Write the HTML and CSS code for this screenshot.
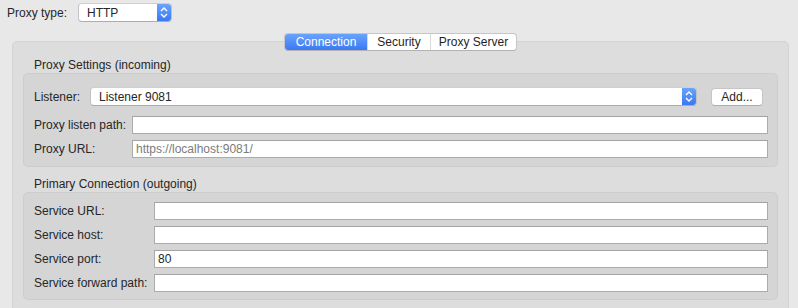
FILE: index.html
```html
<!DOCTYPE html>
<html lang="en">
<head>
    <meta charset="UTF-8">
    <title>Proxy</title>
    <link rel="stylesheet" href="styles.css">
</head>
<body>
    <div class="top-row">
        <span class="label">Proxy type:</span>
        <div class="popup popup-small">
            <span class="popup-text">HTTP</span>
            <span class="stepper">
                <svg width="8" height="11" viewBox="0 0 8 11"><path d="M1 4 L4 1 L7 4 M1 7 L4 10 L7 7" fill="none" stroke="#fff" stroke-width="1.4"/></svg>
            </span>
        </div>
    </div>

    <div class="tabview">
        <div class="tabs">
            <span class="tab active">Connection</span>
            <span class="tab">Security</span>
            <span class="tab">Proxy Server</span>
        </div>

        <div class="group-title">Proxy Settings (incoming)</div>
        <div class="group group-in">
            <div class="row listener-row">
                <span class="label">Listener:</span>
                <div class="popup popup-wide">
                    <span class="popup-text">Listener 9081</span>
                    <span class="stepper">
                        <svg width="8" height="11" viewBox="0 0 8 11"><path d="M1 4 L4 1 L7 4 M1 7 L4 10 L7 7" fill="none" stroke="#fff" stroke-width="1.4"/></svg>
                    </span>
                </div>
                <button class="button">Add...</button>
            </div>
            <div class="row">
                <span class="label label-in">Proxy listen path:</span>
                <input class="field" type="text">
            </div>
            <div class="row">
                <span class="label label-in">Proxy URL:</span>
                <input class="field field-muted" type="text" value="https://localhost:9081/">
            </div>
        </div>

        <div class="group-title group-title-2">Primary Connection (outgoing)</div>
        <div class="group group-out">
            <div class="row">
                <span class="label label-out">Service URL:</span>
                <input class="field" type="text">
            </div>
            <div class="row">
                <span class="label label-out">Service host:</span>
                <input class="field" type="text">
            </div>
            <div class="row">
                <span class="label label-out">Service port:</span>
                <input class="field" type="text" value="80">
            </div>
            <div class="row">
                <span class="label label-out">Service forward path:</span>
                <input class="field" type="text">
            </div>
        </div>
    </div>
</body>
</html>
```

FILE: styles.css
```css
body {
    margin: 0;
    padding: 0;
    background: #e8e8e8;
    font-family: "Liberation Sans", Arial, sans-serif;
    font-size: 12px;
    color: #262626;
    height: 308px;
    overflow: hidden;
}
.top-row {
    display: flex;
    align-items: center;
    height: 19px;
    padding: 3px 7px 0;
}
.top-row .label {
    margin-right: 11px;
}
.popup {
    display: flex;
    align-items: stretch;
    height: 19px;
    box-sizing: border-box;
    background: #fff;
    border: 1px solid #c2c2c2;
    border-top-color: #cfcfcf;
    border-bottom-color: #acacac;
    border-radius: 4px;
    overflow: hidden;
}
.popup-small {
    width: 94px;
}
.popup-text {
    flex: 1;
    display: flex;
    align-items: center;
    padding-left: 8px;
}
.stepper {
    width: 14px;
    display: flex;
    align-items: center;
    justify-content: center;
    background: linear-gradient(to bottom, #6ba4fb, #3a78f4);
}
.tabview {
    margin: 19px 9px 0 12px;
    height: 280px;
    background: #dddddd;
    border: 1px solid #d3d3d3;
    border-radius: 5px;
}
.tabs {
    display: flex;
    width: 233px;
    height: 18px;
    box-sizing: border-box;
    margin: -9px auto 0;
    background: #fff;
    border: 1px solid #c6c6c6;
    border-bottom-color: #b2b2b2;
    border-radius: 4px;
    overflow: hidden;
}
.tab {
    display: flex;
    align-items: center;
    justify-content: center;
    border-left: 1px solid #dadada;
    color: #1f1f1f;
}
.tab:nth-child(1) {
    width: 82px;
    border-left: none;
}
.tab:nth-child(2) {
    width: 62px;
}
.tab:nth-child(3) {
    flex: 1;
}
.tab.active {
    color: #fff;
    background: linear-gradient(to bottom, #6aa3fb, #3b79f4);
}
.group-title {
    height: 15px;
    line-height: 15px;
    margin: 7px 0 0 21px;
}
.group-title-2 {
    margin-top: 10px;
}
.group {
    margin: 0 10px;
    background: #d5d5d5;
    border: 1px solid #cdcdcd;
    border-radius: 5px;
    padding: 0 9px 0 10px;
    display: flex;
    flex-direction: column;
    gap: 6px;
}
.group-in {
    height: 92px;
    padding-top: 13px;
    box-sizing: content-box;
    height: 72px;
    padding-bottom: 7px;
}
.group-out {
    padding-top: 9px;
    padding-bottom: 7px;
}
.row {
    display: flex;
    align-items: center;
    height: 18px;
}
.listener-row {
    height: 19px;
    margin-bottom: 4px;
}
.listener-row .label {
    width: 56px;
}
.popup-wide {
    flex: 1;
}
.button {
    width: 52px;
    height: 18px;
    margin: 0 5px 0 14px;
    padding: 0;
    background: #fff;
    border: 1px solid #c6c6c6;
    border-bottom-color: #adadad;
    border-radius: 4px;
    font-family: inherit;
    font-size: 12px;
    color: #262626;
}
.label-in {
    width: 98px;
}
.label-out {
    width: 120px;
}
.field {
    flex: 1;
    height: 18px;
    box-sizing: border-box;
    margin: 0;
    padding: 0 3px;
    border: 1px solid #ababab;
    border-top-color: #a3a3a3;
    background: #fff;
    font-family: inherit;
    font-size: 12px;
    color: #262626;
    outline: none;
}
.field-muted {
    color: #7b7b7b;
}
```
